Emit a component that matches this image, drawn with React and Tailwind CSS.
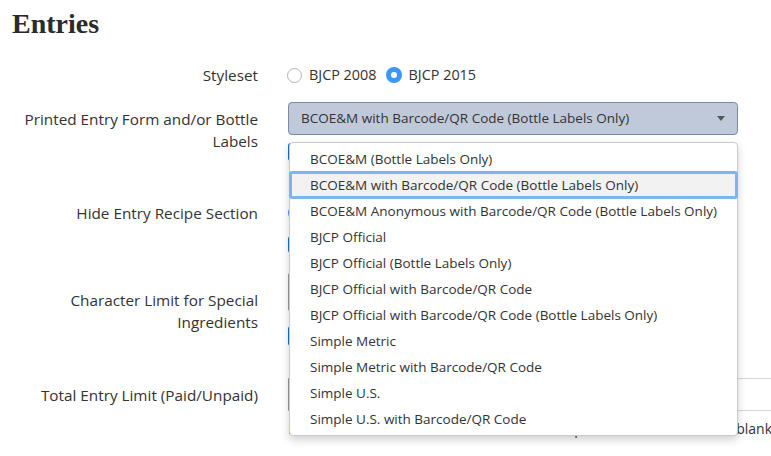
import React from "react";

const options = [
  "BCOE&M (Bottle Labels Only)",
  "BCOE&M with Barcode/QR Code (Bottle Labels Only)",
  "BCOE&M Anonymous with Barcode/QR Code (Bottle Labels Only)",
  "BJCP Official",
  "BJCP Official (Bottle Labels Only)",
  "BJCP Official with Barcode/QR Code",
  "BJCP Official with Barcode/QR Code (Bottle Labels Only)",
  "Simple Metric",
  "Simple Metric with Barcode/QR Code",
  "Simple U.S.",
  "Simple U.S. with Barcode/QR Code",
];

function Radio({ checked, label }) {
  return (
    <label className="flex items-center gap-[7px] text-[14.4px]">
      {checked ? (
        <span className="w-[16px] h-[16px] rounded-full bg-[#3c98f5] flex items-center justify-center">
          <span className="w-[6px] h-[6px] rounded-full bg-white" />
        </span>
      ) : (
        <span className="w-[15px] h-[15px] rounded-full border border-[#b4b4b4] bg-white" />
      )}
      <span>{label}</span>
    </label>
  );
}

function Row({ label, children, className = "", labelClass = "" }) {
  return (
    <div className={"grid grid-cols-[258px_1fr] gap-x-[30px] " + className}>
      <div className={"text-right leading-[22px] text-[15.3px] whitespace-nowrap " + labelClass}>{label}</div>
      <div className="min-w-0">{children}</div>
    </div>
  );
}

export default function App() {
  return (
    <div
      className="w-[771px] h-[456px] overflow-hidden bg-white text-[#333] text-[14px] relative"
      style={{ fontFamily: '"Open Sans", "Noto Sans", sans-serif' }}
    >
      <h1
        className="pl-[12px] pt-[6px] text-[28px] font-bold leading-[36px] text-[#2b2b2b]"
        style={{ fontFamily: '"Liberation Serif", serif' }}
      >
        Entries
      </h1>

      {/* Styleset */}
      <Row label="Styleset" className="mt-[22px] items-center">
        <div className="flex items-center gap-[9px] -ml-[1px] leading-[22px]">
          <Radio label="BJCP 2008" />
          <Radio checked label="BJCP 2015" />
        </div>
      </Row>

      {/* Printed entry form */}
      <Row
        label={<>Printed Entry Form and/or Bottle<br />Labels</>}
        labelClass="pt-[6px]"
        className="mt-[16px] relative"
      >
        <div className="w-[450px] h-[33px] rounded-[4px] border border-[#7d8aa3] bg-[#c0c9da] flex items-center justify-between pl-[12px] pr-[12px] text-[13.5px]">
          <span>BCOE&amp;M with Barcode/QR Code (Bottle Labels Only)</span>
          <span className="w-0 h-0 border-l-[4px] border-r-[4px] border-t-[5px] border-l-transparent border-r-transparent border-t-[#555]" />
        </div>
        <div className="mt-[8px] w-[120px] h-[18px] bg-[#1a6fc0] rounded-[3px]" />

        {/* open dropdown list */}
        <div className="absolute z-10 top-[40px] left-[289px] w-[449px] bg-white border border-[#cacaca] rounded-[4px] shadow-[0_4px_8px_rgba(0,0,0,0.18)] py-[3px] text-[13.5px]">
          {options.map((o, i) => (
            <div
              key={o}
              className={
                "h-[26px] flex items-center pl-[20px] " +
                (i === 1 ? "bg-[#f2f2f2] outline outline-[3px] outline-[#7db5f3] -outline-offset-[2px] rounded-[2px]" : "")
              }
            >
              {o}
            </div>
          ))}
        </div>
      </Row>

      {/* Hide recipe */}
      <Row label="Hide Entry Recipe Section" className="mt-[41px] items-start">
        <div className="flex flex-col gap-[12px]">
          <div className="flex items-center gap-[9px] h-[22px]">
            <Radio checked label="Yes" />
            <Radio label="No" />
          </div>
          <div className="w-[120px] h-[17px] bg-[#1a6fc0] rounded-[3px]" />
        </div>
      </Row>

      {/* Character limit */}
      <Row label={<>Character Limit for Special<br />Ingredients</>} className="mt-[36px]">
        <div className="flex flex-col gap-[14px]">
          <div className="w-[200px] h-[40px] border border-[#999] rounded-[3px] -mt-[17px]" />
          <div className="w-[120px] h-[20px] bg-[#1a6fc0] rounded-[3px]" />
        </div>
      </Row>

      {/* Total entry limit */}
      <Row label="Total Entry Limit (Paid/Unpaid)" className="mt-[38px]">
        <div className="-mt-[6px]">
          <div className="w-[600px] h-[33px] border-y border-[#d5d5d5] border-l border-l-[#999]" />
          <div className="mt-[8px] leading-[20px] whitespace-nowrap">
            Limit to the total number of entries the competition will allow. Leave blank for no limit.
          </div>
        </div>
      </Row>
    </div>
  );
}
